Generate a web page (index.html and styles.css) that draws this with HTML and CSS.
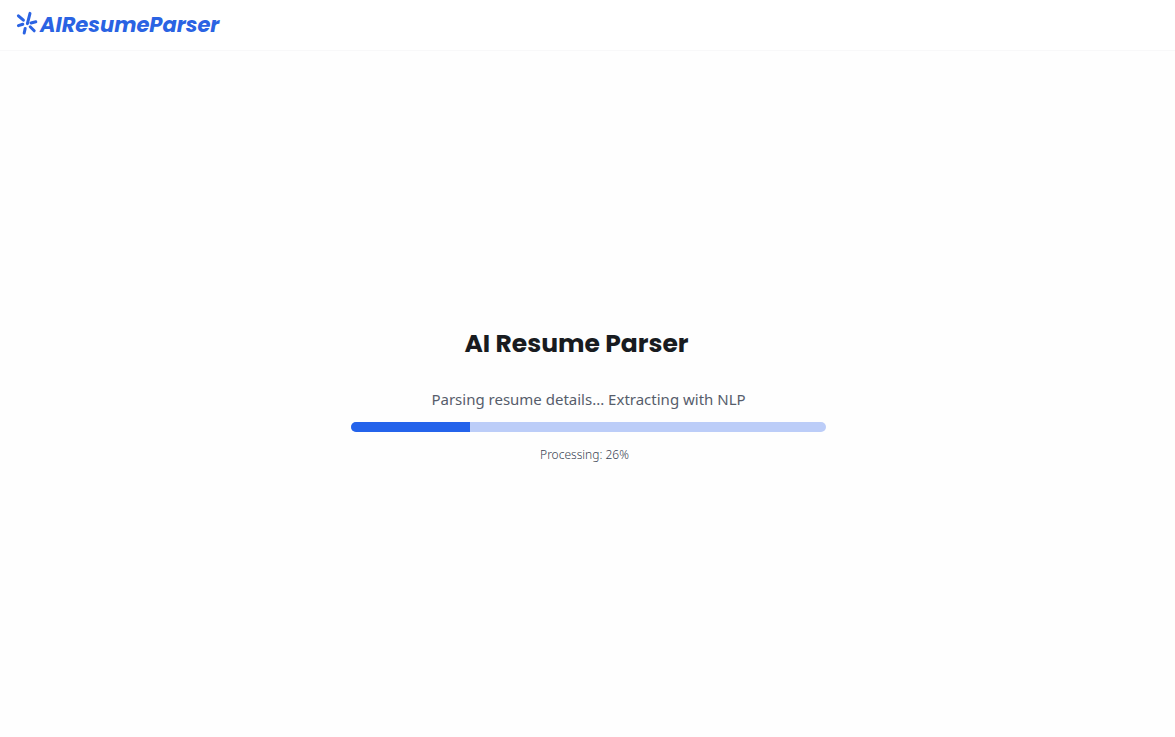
FILE: index.html
```html
<!DOCTYPE html>
<html lang="en">
<head>
<meta charset="utf-8">
<meta name="viewport" content="width=device-width, initial-scale=1">
<title>AI Resume Parser</title>
<link rel="stylesheet" href="styles.css">
</head>
<body>
<header class="topbar">
  <a class="brand" href="#">
    <svg class="brand-icon" viewBox="0 0 22 24" aria-hidden="true">
      <path d="M14 2.4 11.4 12.6M2.4 4.8 7.4 9.2M2.4 14.6 6.8 13.2M9.2 17.4 8.2 22M15 12 19.8 10.8M14.2 15.8 18.2 19.8"/>
    </svg>
    <span class="brand-name">AIResumeParser</span>
  </a>
</header>
<main class="stage">
  <h1 class="title">AI Resume Parser</h1>
  <label class="status" for="progress">Parsing resume details... Extracting with NLP</label>
  <progress class="bar" id="progress" max="100" value="25"></progress>
  <p class="percent">Processing: 26%</p>
</main>
</body>
</html>
```
FILE: styles.css
```css
* {
  box-sizing: border-box;
}

body {
  margin: 0;
  min-height: 100vh;
  display: flex;
  flex-direction: column;
  background: #fefefe;
  color: #565d6b;
  font-family: "Noto Sans", sans-serif;
}

.topbar {
  display: flex;
  align-items: center;
  height: 51px;
  padding: 0 16px;
  background: #fff;
  border-bottom: 1px solid #f8f8f9;
}

.brand {
  display: flex;
  align-items: flex-start;
  gap: 2px;
  color: #2a63e3;
  text-decoration: none;
}

.brand-icon {
  width: 22px;
  height: 24px;
  fill: none;
  stroke: currentColor;
  stroke-width: 3;
  stroke-linecap: round;
}

.brand-name {
  font: italic 700 21px/28px Poppins, Inter, sans-serif;
}

.stage {
  flex: 1;
  display: flex;
  flex-direction: column;
  align-items: center;
  justify-content: center;
  padding: 2px 16px 0 18px;
}

.title {
  margin: 0 0 25px;
  padding-right: 24px;
  color: #181b20;
  font: 700 25px/36px Poppins, Inter, sans-serif;
}

.status {
  margin-bottom: 11px;
  font-size: 15px;
  line-height: 24px;
}

.bar {
  appearance: none;
  display: block;
  width: 100%;
  max-width: 475px;
  height: 10px;
  border: 0;
  border-radius: 5px;
  overflow: hidden;
  background: #bccdf8;
}

.bar::-webkit-progress-bar {
  background: #bccdf8;
}

.bar::-webkit-progress-value {
  background: #2463eb;
}

.bar::-moz-progress-bar {
  background: #2463eb;
}

.percent {
  margin: 14px 0 0;
  padding-right: 8px;
  color: #374151;
  font-size: 12px;
  font-weight: 300;
  line-height: 18px;
}
```
